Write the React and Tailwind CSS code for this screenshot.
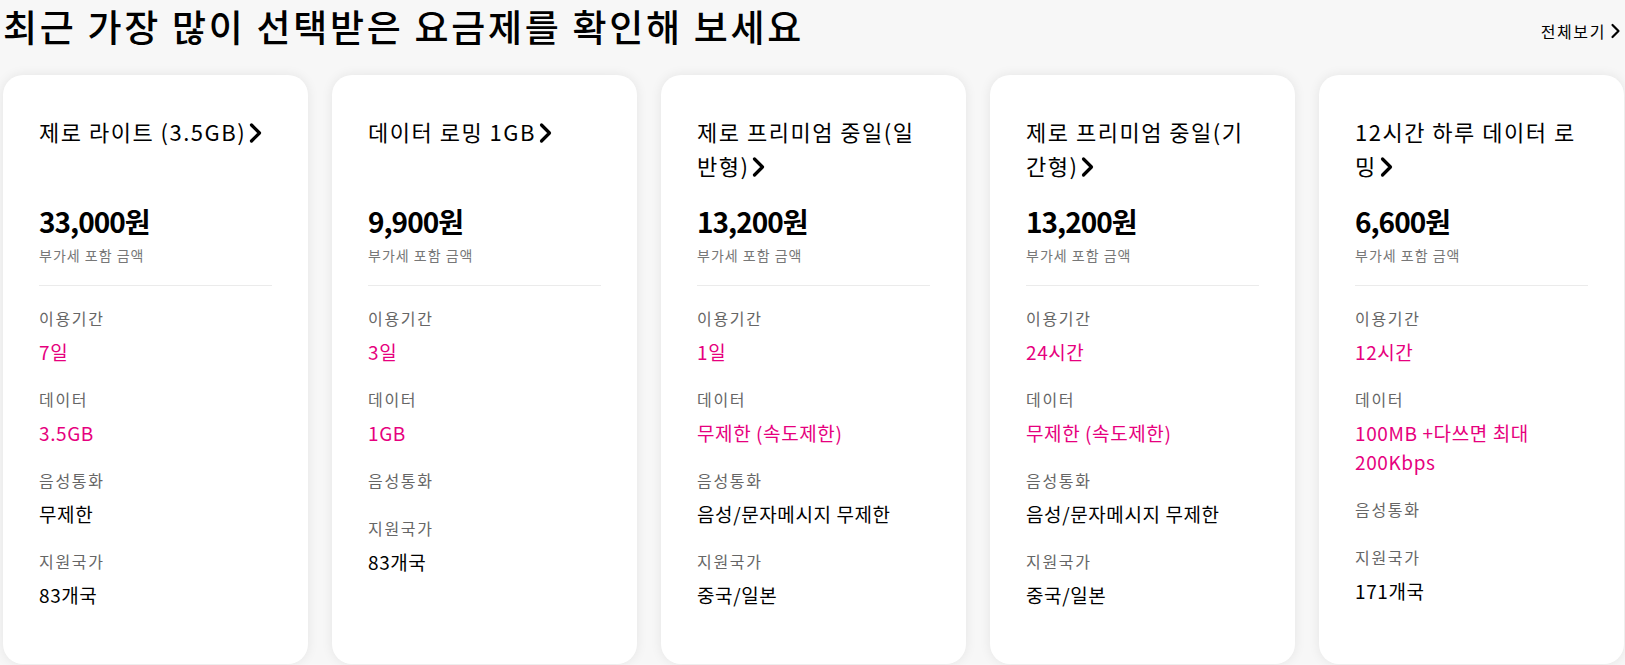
import React from "react";

const plans = [
  {
    title: "제로 라이트 (3.5GB)",
    price: "33,000원",
    items: [
      ["이용기간", "7일", true],
      ["데이터", "3.5GB", true],
      ["음성통화", "무제한", false],
      ["지원국가", "83개국", false],
    ],
  },
  {
    title: "데이터 로밍 1GB",
    price: "9,900원",
    items: [
      ["이용기간", "3일", true],
      ["데이터", "1GB", true],
      ["음성통화", "", false],
      ["지원국가", "83개국", false],
    ],
  },
  {
    title: "제로 프리미엄 중일(일반형)",
    price: "13,200원",
    items: [
      ["이용기간", "1일", true],
      ["데이터", "무제한 (속도제한)", true],
      ["음성통화", "음성/문자메시지 무제한", false],
      ["지원국가", "중국/일본", false],
    ],
  },
  {
    title: "제로 프리미엄 중일(기간형)",
    price: "13,200원",
    items: [
      ["이용기간", "24시간", true],
      ["데이터", "무제한 (속도제한)", true],
      ["음성통화", "음성/문자메시지 무제한", false],
      ["지원국가", "중국/일본", false],
    ],
  },
  {
    title: "12시간 하루 데이터 로밍",
    price: "6,600원",
    items: [
      ["이용기간", "12시간", true],
      ["데이터", "100MB +다쓰면 최대 200Kbps", true],
      ["음성통화", "", false],
      ["지원국가", "171개국", false],
    ],
  },
];

function Chevron() {
  return (
    <svg
      width="15"
      height="22"
      viewBox="0 0 15 22"
      className="inline-block align-[-3px] ml-[2px]"
      fill="none"
    >
      <polyline
        points="3.5,3 11.5,11 3.5,19"
        stroke="#000"
        strokeWidth="3.2"
        strokeLinecap="round"
        strokeLinejoin="round"
      />
    </svg>
  );
}

function Card({ plan }) {
  return (
    <div className="w-[305px] h-[589px] shrink-0 bg-white rounded-[20px] shadow-[0_0_12px_rgba(0,0,0,0.08)] px-[36px] pt-[39px]">
      <div className="min-h-[68px] text-[22px] leading-[34px] tracking-[1.5px] text-black">
        {plan.title}
        <Chevron />
      </div>
      <div className="mt-[21px] text-[28px] leading-[36px] font-bold tracking-[-1px] text-black">
        {plan.price}
      </div>
      <div className="mt-[6px] text-[14px] leading-[20px] tracking-[1px] text-[#777777]">
        부가세 포함 금액
      </div>
      <div className="mt-[20px] h-px bg-[#ebebeb]" />
      <div className="mt-[20px] flex flex-col gap-[21px]">
        {plan.items.map(([label, value, pink]) => (
          <div key={label} className="flex flex-col">
            <div className="text-[16px] leading-[24px] tracking-[1.7px] text-[#666666]">
              {label}
            </div>
            {value ? (
              <div
                className={
                  "mt-[7px] text-[19px] leading-[29px] tracking-[0.6px] " +
                  (pink ? "text-[#e6007e]" : "text-black")
                }
              >
                {value}
              </div>
            ) : (
              <div className="h-[3px]" />
            )}
          </div>
        ))}
      </div>
    </div>
  );
}

export default function App() {
  return (
    <div
      className="w-[1625px] h-[665px] overflow-hidden bg-[#f7f7f7] px-[3px]"
      style={{ fontFamily: '"Noto Sans CJK KR", "Noto Sans", sans-serif' }}
    >
      <div className="h-[75px] flex items-start justify-between">
        <h1 className="text-[37px] leading-[52px] font-medium text-black tracking-[2.7px]">
          최근 가장 많이 선택받은 요금제를 확인해 보세요
        </h1>
        <div className="mt-[19px] flex items-center text-[16px] leading-[24px] tracking-[1.6px] text-black">
          전체보기
          <svg width="12" height="16" viewBox="0 0 12 16" className="ml-[4px]" fill="none">
            <polyline
              points="2.5,2 8.5,8 2.5,14"
              stroke="#000"
              strokeWidth="2.2"
              strokeLinecap="round"
              strokeLinejoin="round"
            />
          </svg>
        </div>
      </div>
      <div className="flex gap-[24px]">
        {plans.map((p) => (
          <Card key={p.title} plan={p} />
        ))}
      </div>
    </div>
  );
}
